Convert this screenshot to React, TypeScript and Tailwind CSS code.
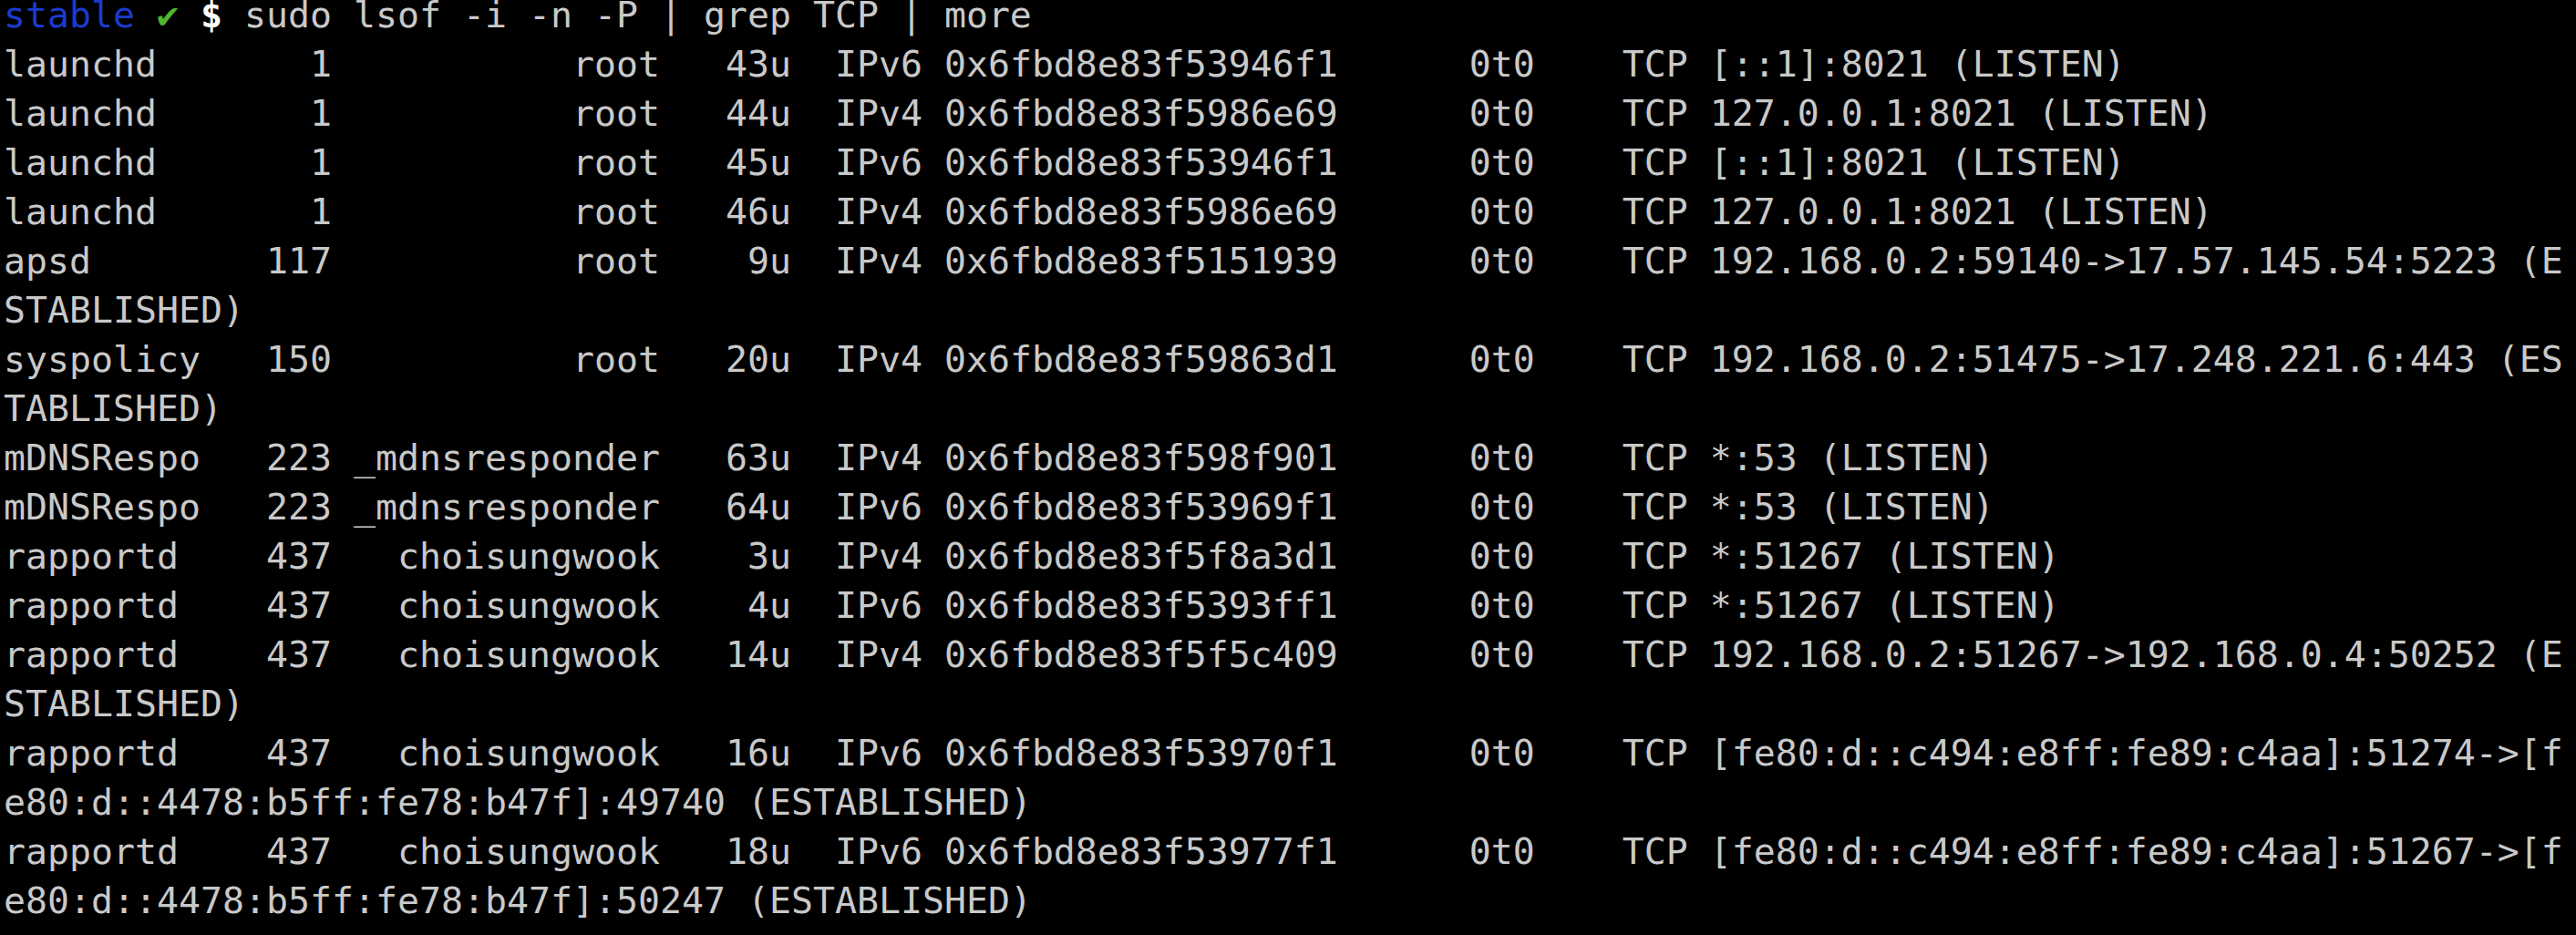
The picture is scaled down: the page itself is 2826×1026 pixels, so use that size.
const COLS = 117;

interface LsofEntry {
    cmd: string;
    pid: string;
    user: string;
    fd: string;
    type: string;
    device: string;
    name: string;
}

const entries: LsofEntry[] = [
    { cmd: 'launchd', pid: '1', user: 'root', fd: '43u', type: 'IPv6', device: '0x6fbd8e83f53946f1', name: '[::1]:8021 (LISTEN)' },
    { cmd: 'launchd', pid: '1', user: 'root', fd: '44u', type: 'IPv4', device: '0x6fbd8e83f5986e69', name: '127.0.0.1:8021 (LISTEN)' },
    { cmd: 'launchd', pid: '1', user: 'root', fd: '45u', type: 'IPv6', device: '0x6fbd8e83f53946f1', name: '[::1]:8021 (LISTEN)' },
    { cmd: 'launchd', pid: '1', user: 'root', fd: '46u', type: 'IPv4', device: '0x6fbd8e83f5986e69', name: '127.0.0.1:8021 (LISTEN)' },
    { cmd: 'apsd', pid: '117', user: 'root', fd: '9u', type: 'IPv4', device: '0x6fbd8e83f5151939', name: '192.168.0.2:59140->17.57.145.54:5223 (ESTABLISHED)' },
    { cmd: 'syspolicy', pid: '150', user: 'root', fd: '20u', type: 'IPv4', device: '0x6fbd8e83f59863d1', name: '192.168.0.2:51475->17.248.221.6:443 (ESTABLISHED)' },
    { cmd: 'mDNSRespo', pid: '223', user: '_mdnsresponder', fd: '63u', type: 'IPv4', device: '0x6fbd8e83f598f901', name: '*:53 (LISTEN)' },
    { cmd: 'mDNSRespo', pid: '223', user: '_mdnsresponder', fd: '64u', type: 'IPv6', device: '0x6fbd8e83f53969f1', name: '*:53 (LISTEN)' },
    { cmd: 'rapportd', pid: '437', user: 'choisungwook', fd: '3u', type: 'IPv4', device: '0x6fbd8e83f5f8a3d1', name: '*:51267 (LISTEN)' },
    { cmd: 'rapportd', pid: '437', user: 'choisungwook', fd: '4u', type: 'IPv6', device: '0x6fbd8e83f5393ff1', name: '*:51267 (LISTEN)' },
    { cmd: 'rapportd', pid: '437', user: 'choisungwook', fd: '14u', type: 'IPv4', device: '0x6fbd8e83f5f5c409', name: '192.168.0.2:51267->192.168.0.4:50252 (ESTABLISHED)' },
    { cmd: 'rapportd', pid: '437', user: 'choisungwook', fd: '16u', type: 'IPv6', device: '0x6fbd8e83f53970f1', name: '[fe80:d::c494:e8ff:fe89:c4aa]:51274->[fe80:d::4478:b5ff:fe78:b47f]:49740 (ESTABLISHED)' },
    { cmd: 'rapportd', pid: '437', user: 'choisungwook', fd: '18u', type: 'IPv6', device: '0x6fbd8e83f53977f1', name: '[fe80:d::c494:e8ff:fe89:c4aa]:51267->[fe80:d::4478:b5ff:fe78:b47f]:50247 (ESTABLISHED)' },
    { cmd: 'rapportd', pid: '437', user: 'choisungwook', fd: '77u', type: 'IPv4', device: '0x6fbd8e83f5f83ed1', name: '192.168.0.2:51268->17.248.221.7:443 (ESTABLISHED)' },
];

const padTo = (s: string, col: number) => (s.length < col ? s + ' '.repeat(col - s.length) : s + ' ');

const formatEntry = (e: LsofEntry) => {
    let line = e.cmd;
    line = padTo(line, 15 - e.pid.length) + e.pid;
    line = padTo(line, 30 - e.user.length) + e.user;
    line = padTo(line, 36 - e.fd.length) + e.fd;
    line = padTo(line, 38) + e.type;
    line = padTo(line, 43) + e.device;
    line = padTo(line, 67) + '0t0';
    line = padTo(line, 74) + 'TCP ' + e.name;
    return line;
};

// split a long line the way the terminal wraps it
const wrap = (line: string) => {
    const rows: string[] = [];
    for (let i = 0; i < line.length; i += COLS) rows.push(line.slice(i, i + COLS));
    return rows;
};

const rows = entries.flatMap((e) => wrap(formatEntry(e)));

const App = () => {
    return (
        <div className="w-full h-[1026px] overflow-hidden bg-black">
            <div
                className="-mt-[11px] pl-[4px] text-[39.86px] leading-[54px] text-[#c9c9c9] whitespace-pre"
                style={{ fontFamily: '"DejaVu Sans Mono", "Liberation Mono", monospace' }}
            >
                <div>
                    <span className="text-[#1b3bd0]">stable</span>
                    <span> </span>
                    <span className="inline-block w-[1ch] text-center text-[#4fb52d]">✔</span>
                    <span> </span>
                    <span className="font-bold text-white">$</span>
                    <span> sudo lsof -i -n -P | grep TCP | more</span>
                </div>
                {rows.map((r, i) => (
                    <div key={i}>{r}</div>
                ))}
            </div>
        </div>
    );
};

export default App;
